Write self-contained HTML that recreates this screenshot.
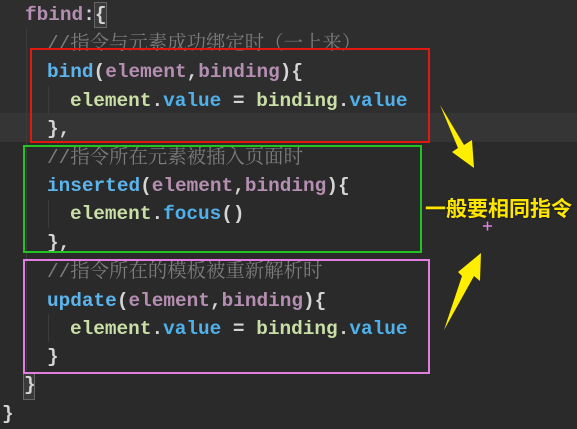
<!DOCTYPE html>
<html><head><meta charset="utf-8"><style>
body{margin:0;width:577px;height:429px;background:#2a2a2a;overflow:hidden;position:relative;font-family:"Liberation Mono","Noto Sans CJK SC",monospace;}
.l{position:absolute;left:0;height:28px;line-height:28px;font-size:19.4px;white-space:pre;color:#d4d4d4;font-weight:bold;}
.f{color:#5cb4ec}.p{color:#b58fb2}.g{color:#c9dfa6}.v{color:#4fb0ea}.c{color:#7c7c7c;font-weight:normal;font-family:"Liberation Mono","Noto Serif CJK SC",monospace}
.box{position:absolute;box-sizing:border-box;border:2px solid}
.guide{position:absolute;width:1px;background:#3c3c3c}
</style></head><body>
<div style="position:absolute;left:0;top:0;width:577px;height:113px;background:#2e2e2e"></div>
<div style="position:absolute;left:0;top:113px;width:577px;height:29px;background:#353535"></div>
<div class="guide" style="left:26px;top:28px;height:370px"></div>
<div class="guide" style="left:48px;top:86px;height:28px"></div>
<div class="guide" style="left:48px;top:200px;height:28px"></div>
<div class="guide" style="left:48px;top:314px;height:28px"></div>
<div style="position:absolute;left:94px;top:2px;width:11px;height:24px;border:1px solid #666;background:#3a3a3a"></div>
<div style="position:absolute;left:23px;top:372px;width:10px;height:26px;border:1px solid #666;background:#3a3a3a"></div>
<div class="l" style="top:1px;left:25px"><span class="p">fbind</span>:{</div>
<div class="l c" style="top:30px;left:47px">//指令与元素成功绑定时（一上来）</div>
<div class="l" style="top:58px;left:47px"><span class="f">bind</span>(<span class="p">element</span>,<span class="p">binding</span>){</div>
<div class="l" style="top:87px;left:70px"><span class="g">element</span>.<span class="v">value</span> = <span class="g">binding</span>.<span class="v">value</span></div>
<div class="l" style="top:115px;left:47px">},</div>
<div class="l c" style="top:144px;left:47px">//指令所在元素被插入页面时</div>
<div class="l" style="top:172px;left:47px"><span class="f">inserted</span>(<span class="p">element</span>,<span class="p">binding</span>){</div>
<div class="l" style="top:200px;left:70px"><span class="g">element</span>.<span class="v">focus</span>()</div>
<div class="l" style="top:229px;left:47px">},</div>
<div class="l c" style="top:258px;left:47px">//指令所在的模板被重新解析时</div>
<div class="l" style="top:287px;left:47px"><span class="f">update</span>(<span class="p">element</span>,<span class="p">binding</span>){</div>
<div class="l" style="top:315px;left:70px"><span class="g">element</span>.<span class="v">value</span> = <span class="g">binding</span>.<span class="v">value</span></div>
<div class="l" style="top:343px;left:47px">}</div>
<div class="l" style="top:371px;left:24px">}</div>
<div class="l" style="top:400px;left:2px">}</div>
<div class="box" style="left:30px;top:48px;width:400px;height:95px;border-color:#e01a10"></div>
<div class="box" style="left:23px;top:145px;width:399px;height:108px;border-color:#22c422"></div>
<div class="box" style="left:23px;top:259px;width:407px;height:115px;border-color:#e07fe0"></div>
<svg style="position:absolute;left:0;top:0" width="577" height="429">
<polygon points="440,105 458,148 452,152 474,168 472,140 464,145" fill="#ffee00"/>
<polygon points="444,330 462,276 458,272 481,253 480,281 474,276" fill="#ffee00"/>
<path d="M483 226h9M487.5 221.5v9" stroke="#e080e0" stroke-width="1.5"/>
</svg>
<div style="position:absolute;left:425px;top:194px;font:bold 21px 'Noto Sans CJK SC',sans-serif;color:#ffe600;line-height:28px;text-shadow:0 0 2px #222,1px 1px 1px #222">一般要相同指令</div>
</body></html>
